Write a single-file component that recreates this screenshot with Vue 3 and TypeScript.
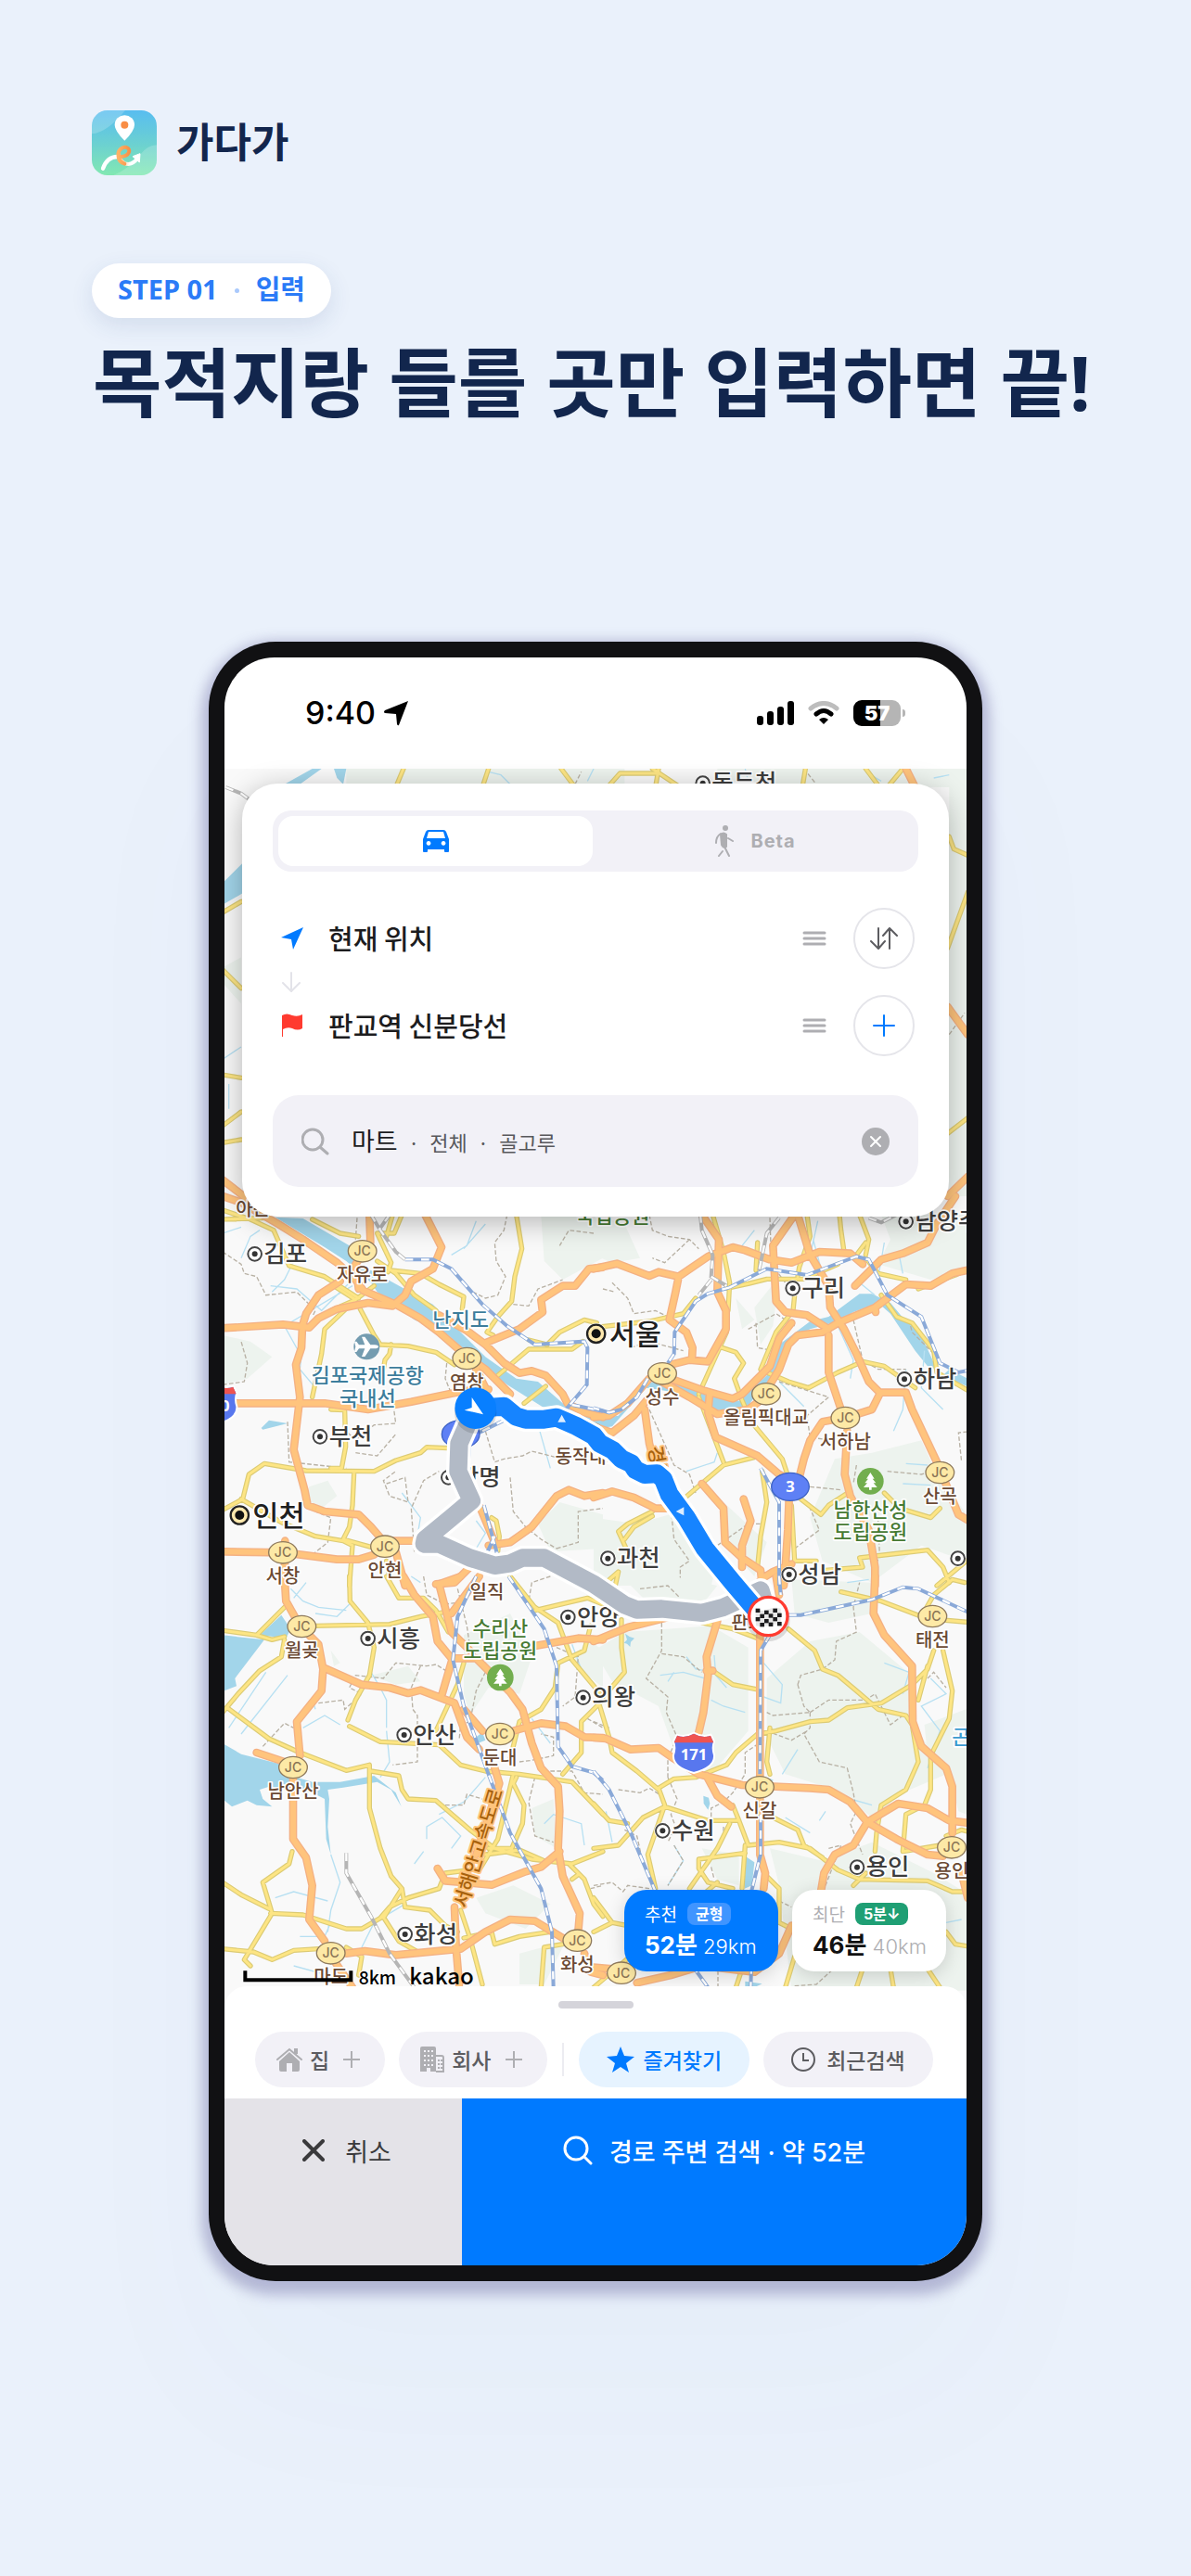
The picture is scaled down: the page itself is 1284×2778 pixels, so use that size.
<script setup lang="ts">
interface Tile {
  x: number
  y: number
  green: string
  water: string
  stream: string
  border: string
  yellow: string
  orange: string
  rail: string
  oldRail: string
}
interface Place {
  name: string
  x: number
  y: number
}

const tiles: Tile[] = [
  {
    x: 0,
    y: 0,
    green:
      'M1030 60 L1230 60 L1230 200 L1100 270 L1040 210Z M0 450 L90 470 L160 520 L80 590 L0 610Z M280 940 L340 920 L370 970 L320 1010 L270 980Z M1020 1060 L1090 990 L1230 1030 L1230 1140 L1060 1150Z',
    water:
      'M170 68 L260 72 L410 160 L430 220 L480 240 L680 350 L760 430 L850 520 L950 590 L1020 600 L1100 670 L1230 720 L1230 765 L1080 710 L920 610 L850 560 L730 450 L620 400 L500 310 L480 280 L400 210 L330 165Z M125 750 L150 725 L210 735 L130 755Z',
    stream:
      'M250 510 L200 420 L420 290 M155 290 L240 300 L320 370 L420 270 M230 210 L200 270 L160 310 M820 80 L790 160 L740 190 M850 90 L780 170 M260 470 L250 560 L300 620 M1020 740 L1060 880 M630 1100 L640 1040 L580 960 M820 1050 L850 1090 L820 1140 M0 120 L60 100 M60 200 L90 130 L120 110',
    border:
      'M0 180 L60 220 L70 250 L110 260 L140 320 L240 310 L300 370 L290 390 M435 70 L430 140 M920 60 L910 110 L880 150 L885 210 L915 260 L890 320 L850 330 L810 310 M940 350 L990 355 L1020 300 L1100 270 M1200 120 L1120 110 L1090 160 M725 540 L720 590 L740 640 M0 610 L70 600 L80 540 L60 470 M210 730 L215 860 L400 880 M390 750 L430 790 L490 740 L560 735 L550 660 M430 830 L500 840 L560 770 M530 930 L590 910 L600 990 L540 970 L520 920 L560 890 M850 760 L880 860 L910 850 L970 840 L1000 825 L1080 845 M930 910 L940 1020 L980 1070 L1030 1110 L1080 1140 M290 1160 L340 1120 L350 1040 L300 1020 M620 1150 L610 1010 L650 920 L700 890 M1080 1140 L1150 1120 L1150 1020 L1230 1010',
    yellow:
      'M0 45 L90 75 L165 110 L215 225 L330 260 L440 330 M290 75 L380 120 L440 130 M0 75 L150 70 M550 60 L530 130 M580 60 L555 120 L500 120 L545 215 L535 245 M500 210 L560 250 L620 320 L690 370 M545 240 L640 250 L700 285 L780 325 L775 365 M950 60 L968 170 L945 260 L935 340 L890 390 L855 440 L875 450 M490 290 L430 335 L350 370 M360 290 L430 335 L330 430 L320 510 L290 650 M445 365 L490 450 L510 480 L600 485 L690 505 L750 545 M545 480 L540 510 L525 530 L520 560 M350 690 L395 692 L398 810 L385 880 L350 880 M0 1015 L65 980 L85 900 L135 865 L270 888 L490 890 L560 855 L640 830 L660 812 L730 815 M425 895 L420 1000 L410 1070 L390 1110 L480 1135 M60 980 L190 1055 L300 1100 L390 1115 L420 1130 L410 1260 M890 580 L990 495 L1130 495 L1165 470 M990 465 L1050 480 L1090 440 L1170 400 L1210 410 M1045 615 L975 670 M870 1040 L885 1050 L895 1100 L890 1150 M530 1180 L540 1230',
    orange:
      'M0 0 L60 20 L180 90 L260 140 L370 215 L430 270 L455 305 L560 350 L640 395 L700 440 L780 510 L850 560 L930 640 M475 60 L478 150 L430 220 L440 300 M655 60 L708 165 L680 235 L610 275 L590 320 L550 355 M0 427 L195 415 L280 425 L310 395 L370 365 L470 345 L550 355 M380 275 L310 320 L270 380 L258 420 L255 490 L237 545 L250 650 L230 820 L265 950 L275 1000 L330 1020 L440 1030 L480 1070 L515 1110 M0 670 L330 670 L470 690 L610 665 L780 630 L860 625 M1230 230 L1185 235 L1140 290 L1100 290 L1030 335 L1035 375 L960 430 L850 475 M700 385 L790 435 L850 480 L910 540 L960 572 L1000 565 L1045 580 L1100 640 L1115 670 L1170 700 L1230 715 M0 1150 L200 1153 L370 1175 L440 1175 L490 1160 L530 1115 L620 1115 M202 1115 L200 1240 M690 1255 L750 1250 L800 1200 M860 1130 L930 1120 L1000 1070 L1080 970 L1120 950 L1170 970 L1230 960 M820 560 L850 620 M560 1150 L590 1260 M830 1000 L880 1120',
    rail:
      'M590 205 L680 205 L740 235 L840 350 L920 420 L1010 480 L1170 470 L1180 490 L1178 610 L1110 690 M1130 675 L1230 695 M910 725 L800 780 L795 850 M845 1000 L890 1165 M880 1100 L850 1165',
    oldRail: 'M480 60 L510 110 L560 180 L590 205 M540 60 L505 110'
  },
  {
    x: 1200,
    y: 0,
    green:
      'M0 60 L100 90 L150 200 L60 215 L0 190Z M520 360 L600 260 L580 420 L540 480Z M930 60 L1230 60 L1230 230 L1090 270 L920 220 L960 140Z M780 850 L900 830 L1060 790 L1110 900 L1230 1060 L1230 1190 L1060 1130 L900 1250 L740 1180 L700 1040Z M0 1040 L140 1060 L280 1020 L400 1180 L380 1260 L0 1260Z M420 990 L560 1120 L520 1230 L440 1140Z M460 330 L520 400 L480 430Z',
    water:
      'M600 480 L700 405 L760 390 L860 316 L900 316 L960 345 L1010 405 L1050 430 L1110 560 L1080 550 L1040 500 L960 380 L920 345 L840 375 L790 405 L700 430 L650 460 L610 540 L570 620 L520 650 L490 692 L400 692 L300 640 L170 620 L60 745 L0 755 L0 720 L80 710 L170 600 L300 612 L470 662 L560 580Z M1150 560 L1230 600 L1230 625 L1130 580Z',
    stream:
      'M725 80 L705 170 L730 220 M520 110 L480 160 M940 150 L930 210 L920 260 M860 280 L910 320 M790 420 L840 530 L830 590 M1010 560 L1000 690 L970 760 M400 830 L390 860 L300 890 M1000 930 L1090 935 M1010 865 L1080 870 M1070 500 L1060 620 L1130 690 M990 200 L1000 250 M710 140 L780 400 M600 600 L680 680',
    border:
      'M180 60 L190 110 L240 130 L310 140 L340 170 M310 140 L230 215 L190 200 M60 280 L110 330 L130 380 L200 370 L240 390 M30 300 L70 310 M120 490 L180 470 L290 500 M570 70 L575 220 L620 280 M525 410 L530 490 L580 500 L600 450 M500 430 L590 380 L650 420 M840 400 L870 530 L920 560 L1010 560 M1020 400 L1030 440 L1110 520 M180 690 L260 870 L310 900 L330 960 M600 600 L760 650 L690 710 L700 780 L770 790 M850 870 L840 930 M950 890 L1060 900 L1120 880 M700 940 L800 950 M1230 760 L1180 765 L1190 860 M250 1010 L260 1110 L310 1180 L280 1200 L280 1260 M400 1130 L500 1060 L540 1060 M650 1140 L730 1080 L700 1010 M920 1050 L925 1160 L900 1230',
    yellow:
      'M385 60 L420 180 L440 280 L435 370 M430 298 L500 283 L560 268 L680 268 L790 220 M0 425 L180 405 L290 380 L330 330 M530 150 L525 240 M690 60 L700 130 L665 230 L660 260 M795 60 L800 110 L810 180 M860 60 L890 140 L880 190 M880 150 L850 190 M650 320 L645 370 L590 440 L540 560 M340 640 L430 440 M415 490 L460 505 L485 540 L455 590 L480 660 L510 730 L610 850 L630 910 M560 570 L630 600 L695 620 L790 570 L870 535 L940 550 L1040 620 M340 650 L420 860 M520 845 L420 870 L290 980 M880 200 L920 250 L1010 270 M930 320 L980 390 L1030 410 L1100 500 L1110 570 L1230 640 M1050 300 L1170 255 L1230 225 M545 890 L560 990 L540 1100 L530 1200 M640 1000 L650 1180 L720 1180 M670 980 L735 1030 L760 1000 L830 955 M940 960 L990 1010 L1090 1040 L1120 1010 M190 1020 L110 1060 L80 1085 L110 1150 M190 1035 L130 1070 L100 1110 M750 1210 L870 1200 L860 1170 L990 1155 L1080 1145 L1130 1200 L1150 1250 M1110 1260 L1230 1160 M70 1260 L80 1215 L40 1250',
    orange:
      'M350 60 L405 140 L400 310 L428 370 L428 430 L370 535 L310 530 L250 545 M275 260 L265 310 L245 400 L300 440 L320 490 L318 530 M0 235 L75 218 L180 258 L210 245 L275 260 L370 195 L450 165 L490 175 L570 205 L640 215 L730 180 L830 185 L870 220 M650 60 L580 160 L590 340 L620 375 L690 385 L760 430 M660 60 L700 190 L760 290 L765 360 L810 430 L850 510 L890 600 L925 635 L1010 635 L1030 690 L1110 860 L1180 1030 L1230 1060 M845 290 L930 205 L1000 185 L1080 150 L1110 90 L1170 0 M1230 235 L1160 250 L1090 290 L1010 285 L910 360 L790 410 L740 440 L660 450 L630 480 L600 560 L540 660 L500 690 L400 705 L310 650 L220 600 M910 360 L912 375 M640 410 L600 460 L570 550 L480 640 L450 655 L360 630 L220 580 L180 590 L110 670 L50 710 L0 715 M375 640 L370 700 L395 780 L530 840 L600 900 L640 920 M180 650 L130 710 L60 765 L0 745 M165 690 L180 800 L190 840 M760 450 L760 570 L800 690 M925 640 L900 690 L820 715 L740 730 L700 790 L680 850 L665 910 M820 760 L812 900 L830 970 L890 1080 L910 1200 L910 1260 M350 930 L420 1010 L425 1120 L480 1170 L540 1210 L545 1260 M485 980 L508 1050 L480 1130 L480 1200 M632 980 L628 1080 L620 1200 L615 1260 M0 975 L60 955 L130 975 L200 1010 L240 1010 M540 1240 L580 1215 L640 1190',
    rail:
      'M440 295 L560 235 L690 255 L850 195 L890 205 L950 320 L1060 390 L1120 540 L1180 570 L1230 560 M440 295 L370 315 L330 340 L262 440 L260 510 L240 540 M175 590 L140 650 L90 690 L50 700 L0 685 M540 880 L600 990 L600 1260',
    oldRail:
      'M345 60 L350 110 L385 190 L380 260 L430 290 M380 270 L340 320 M600 70 L560 120 L535 240 M890 70 L930 85 L980 60'
  },
  {
    x: 0,
    y: 1230,
    green:
      'M780 190 L930 120 L1000 260 L960 380 L860 360 L800 450 L780 380Z M480 320 L600 290 L640 340 L560 350Z M1000 750 L1070 720 L1080 880 L1010 840Z M820 1040 L940 1000 L1060 1060 L980 1140 L850 1090Z M1180 0 L1230 30 L1230 60Z M1180 200 L1230 240 L1230 360 L1130 280Z M350 240 L380 280 L360 290Z M960 1220 L1110 1180 L1040 1320 L960 1320Z',
    water:
      'M0 190 L135 205 L40 330 L45 355 L0 372Z M190 125 L220 170 L205 200 L120 190Z M0 540 L60 575 L180 605 L240 650 L290 665 L380 665 L490 645 L560 700 L578 745 L545 690 L500 665 L390 683 L340 690 L345 720 L340 810 L350 900 L335 850 L330 720 L290 700 L150 680 L120 690 L130 720 L160 745 L110 740 L80 725 L30 745 L0 720Z M820 520 L840 505 L850 530 L825 540Z',
    stream:
      'M220 40 L260 80 L310 100 L400 110 M270 20 L230 70 M300 120 L370 130 L410 90 M480 310 L510 360 L530 400 L530 490 M290 400 L300 430 M260 490 L330 450 L380 480 M20 490 L140 310 M60 510 L210 320 M530 500 L540 600 L510 650 M850 650 L780 730 L700 770 M660 850 L660 810 L710 780 L770 840 L740 880 M650 890 L620 930 M350 900 L380 990 L350 1080 L340 1150 M170 1040 L230 1020 L340 1050 M250 1165 L330 1165 L350 1120 M590 1060 L490 1120 L450 1200 M1040 800 L1070 770 L1160 800 L1170 870 M1060 540 L1000 460 M1130 220 L1160 300 M610 0 L640 20 M230 1260 L340 1290 L340 1320',
    border:
      'M310 410 L390 400 L395 430 L450 380 L410 360 L430 320 L520 330 L560 280 L660 290 L690 285 L730 310 M640 290 L610 360 L615 430 L630 450 L630 600 L550 610 M130 550 L200 475 L230 490 M650 0 L660 60 L720 90 L760 85 M760 40 L790 160 L800 230 L855 300 L820 370 L800 470 L770 480 L765 530 M1060 0 L1000 20 L990 80 M1040 170 L1050 230 M1080 230 L1150 260 L1140 390 L1100 420 M1180 460 L1230 490 M960 600 L1000 595 L1070 580 L1070 520 L1030 510 M720 740 L780 740 L790 705 L840 720 M1010 650 L990 730 L1010 840 L1070 860 M1060 630 L1130 630 L1170 700 L1230 705 M1190 1010 L1230 1000',
    yellow:
      'M0 175 L110 190 L160 205 L200 195 M110 190 L200 100 M300 160 L540 155 L640 130 L720 115 M410 0 L412 80 L470 150 L490 230 L475 320 L430 400 L405 465 M200 205 L190 260 L120 305 L50 380 L0 440 M15 425 L150 525 L250 570 L400 628 L475 610 L475 750 L510 880 L545 970 L580 1010 L590 1070 M580 1010 L520 1105 M410 485 L510 535 L700 545 L770 610 L850 630 L960 640 L1130 665 L1230 770 M480 630 L570 645 L580 690 L600 720 L690 725 L800 820 L880 880 L1000 915 L1130 930 L1230 890 M530 0 L570 70 L650 70 L690 110 L730 180 M780 280 L760 350 L690 500 M930 0 L1010 100 L1085 150 L1130 270 L1230 390 M1010 110 L1180 70 L1230 90 M1190 160 L1170 240 L1085 280 L1075 360 L1030 430 L960 470 L930 590 M1230 400 L1160 470 L1160 570 L1100 640 M940 640 L890 850 L830 950 M800 950 L720 960 L700 1010 L600 1040 L540 1070 L510 1105 M950 650 L940 670 L975 740 L970 800 L935 880 L860 880 M850 900 L960 885 L1040 920 M590 1070 L670 1080 L720 1130 L760 1150 M0 990 L60 1030 L150 1075 M155 1090 L260 1095 L400 1140 L450 1140 L520 1100 M225 890 L215 930 L130 990 L160 1090 L70 1240 L90 1260 M0 1205 L100 1215 L160 1240 L230 1210 L310 1205 M400 1200 L450 1230 L440 1290 M525 1110 L570 1180 L640 1220 M770 1080 L800 1170 L840 1320 M780 1170 L870 1150 L880 1190 L960 1165 L1060 1150 M1030 1330 L1040 1200 L1100 1190 M1120 930 L1170 980 L1200 1060 L1230 1100 M1130 980 L1150 965',
    orange:
      'M200 0 L205 80 L250 160 L310 220 L325 300 L320 370 L240 470 L250 580 M325 295 L450 350 L540 360 L600 378 L640 368 L750 410 L790 520 L830 560 M110 570 L200 600 M228 640 L228 850 L270 910 L290 1000 L280 1110 L330 1180 M585 0 L620 60 L680 130 L695 210 L740 265 L820 265 L930 375 L970 430 L1000 540 L1030 620 L1085 680 L1090 760 L1085 880 L1100 970 L1155 1090 L1150 1150 M700 25 L740 180 L800 240 M770 0 L700 25 M830 0 L740 120 M745 260 L710 380 M780 430 L840 500 M940 500 L1030 475 L1110 485 L1170 520 L1230 522 M880 620 L895 670 L820 900 M695 945 L720 985 L870 998 L980 955 L1030 940 L1090 890 M400 1220 L460 1212 L560 1225 L770 1205 L850 1150 L930 1110 L1010 1115 L1100 1170 L1150 1180 M750 1070 L755 1200 L765 1320 M1010 225 L1150 200 L1230 205 M365 1250 L420 1330 M1170 1220 L1190 1280 L1230 1290',
    rail:
      'M820 0 L760 130 L745 270 L780 420 L860 640 L930 830 L1030 1010 L1065 1150 L1070 1330 M925 0 L1040 170 L1080 290 L1085 550 L1130 615 L1200 635 L1230 660',
    oldRail: 'M400 895 L400 960 L480 1100 L540 1220 L620 1330'
  },
  {
    x: 1200,
    y: 1230,
    green:
      'M0 240 L100 180 L380 160 L500 230 L500 500 L380 640 L260 560 L210 420 L60 340Z M560 330 L700 210 L860 180 L1040 330 L1030 470 L1140 640 L1000 700 L900 780 L780 690 L620 640 L560 520Z M640 10 L900 20 L900 120 L760 150 L650 120Z M120 30 L260 0 L400 30 L360 80 L160 70Z M1070 480 L1230 420 L1230 780 L1180 760 L1150 640 L1080 580Z M570 880 L740 920 L900 860 L1100 960 L1230 1040 L1230 1340 L640 1340 L600 1000Z M350 880 L470 900 L470 1000 L400 980Z',
    water:
      'M490 905 L520 925 L512 1000 L488 1010Z M355 710 L372 716 L376 735 L370 755 L356 735Z M102 185 L116 195 L132 200 L120 212 L118 228 L108 218 L98 215 L108 205Z M490 1310 L545 1318 L520 1330 L490 1330Z',
    stream:
      'M215 320 L290 310 L360 330 M300 260 L330 300 L390 310 M390 255 L395 320 L430 360 M240 340 L260 310 M380 400 L420 420 L490 440 M550 280 L610 350 L605 410 L550 390 M660 560 L610 640 M550 650 L580 660 M940 280 L1020 310 L1000 380 M1090 330 L1140 380 L1060 420 L1120 500 L1080 620 M620 780 L700 830 M830 720 L900 740 M750 760 L730 790 M820 20 L890 10 M240 1000 L290 920 L260 870 M1140 1120 L1190 1110 M60 860 L40 760',
    border:
      'M150 40 L240 30 L280 70 M220 150 L220 240 L170 330 L240 390 L235 440 L270 520 L240 590 L240 650 M220 250 L290 260 L350 310 M660 350 L670 320 L740 300 L780 270 L785 210 L850 180 L840 100 L860 20 M660 350 L680 420 L700 440 L580 450 L560 440 M700 440 L760 400 L880 400 L910 380 L960 480 L1000 450 M700 440 L700 490 L680 510 L730 600 L820 620 L840 700 L850 760 L830 800 L870 900 M560 500 L640 530 L690 500 M550 530 L490 570 L490 640 L450 700 L420 730 L380 750 L380 820 L330 830 M240 650 L270 720 L250 770 L265 810 L240 860 M80 690 L150 700 L180 685 L220 710 M100 820 L140 840 L160 930 M420 810 L420 840 M260 870 L290 920 L240 1000 M380 940 L390 980 M0 1000 L60 990 L95 1020 L110 1000 L180 1010 M1080 330 L1100 310 L1140 360 M760 880 L800 870 L750 1000 M600 1050 L640 1070 M650 1325 L720 1320 L770 1275 M402 1275 L402 1330 M0 470 L50 490',
    yellow:
      'M350 150 L450 170 L530 200 M630 170 L715 240 L740 300 L790 320 L850 370 L920 430 L1010 450 L1030 480 L1050 600 L1010 690 L930 740 L915 830 L910 890 M385 305 L450 350 L525 365 M1100 240 L1080 300 L1030 350 L930 410 L820 425 L760 465 L700 470 L590 500 L530 510 L460 570 L430 610 L330 650 L260 655 L210 685 L230 740 L175 900 L200 1010 M570 490 L560 600 L570 640 M1130 240 L1160 370 L1150 460 L1090 580 L1090 690 L1070 740 L1010 770 L1000 890 M800 50 L930 80 L1060 130 L1100 60 L1160 10 L1200 20 M1060 135 L1230 150 M1080 290 L1050 400 M20 420 L50 520 L60 570 L140 630 L210 690 M0 880 L80 870 L160 780 L230 745 L370 790 L470 790 M500 870 L600 860 L700 880 L790 950 L860 980 L1080 985 L1160 1020 L1230 1020 M0 735 L50 790 L110 800 M440 800 L400 880 L310 1010 M490 870 L480 1010 M490 895 L340 915 L340 945 L370 990 L450 1010 M450 740 L470 790 L500 870 M580 780 L660 820 L680 870 L740 910 M560 970 L600 1010 L600 1120 L640 1140 M0 1040 L60 1120 L0 1150 M60 1120 L110 1130 M90 140 L90 230 L100 310 L40 380 M1140 1150 L1170 1190 L1230 1200 M650 1230 L620 1330 M870 1270 L850 1330 M960 1270 L970 1330 M1080 1270 L1120 1330 M480 1270 L460 1330 M400 990 L0 1330 M1120 870 L1000 890 M840 1000 L880 960 M1140 840 L1190 820 L1230 830',
    orange:
      'M910 0 L905 120 L940 190 L1030 290 L1032 470 L1060 550 L1140 620 L1160 680 L1160 830 M400 145 L365 260 L370 320 L355 440 L340 505 M365 305 L385 305 M0 210 L110 165 L250 130 M0 522 L40 525 L120 560 L210 555 L260 590 L340 640 L480 675 L700 685 L760 690 L830 730 L885 795 L980 850 L1080 900 L1130 905 M365 645 L400 710 L445 745 M885 795 L840 870 L780 900 L745 960 L735 1020 M885 795 L985 735 L1080 750 L1150 790 L1230 800 M538 190 L538 900 L555 960 L550 1010 M1190 960 L1210 1040 M0 1265 L60 1270 M140 1315 L250 1290 L350 1260 L520 1280 L600 1220 L640 1130 M590 0 L600 60',
    rail:
      'M570 190 L540 240 L538 640 M540 770 L540 900 L510 1020 M510 1260 L508 1330 M630 125 L670 125 L900 75 L1000 35 L1050 40 L1230 125 M600 0 L605 60 M0 630 L50 690 L120 830 L200 1020 M320 1260 L370 1330',
    oldRail: ''
  },
  {
    x: 0,
    y: -1383,
    green: 'M400 0 L1300 0 L1300 60 L400 60Z M1600 0 L2410 0 L2410 1383 L2350 1383 L2350 60 L1600 60Z M6 640 L60 610 L60 760 L6 700Z',
    water: 'M200 50 L290 0 L320 0 L250 50Z M360 0 L400 0 L390 50 L370 30Z M0 370 L70 300 L70 400 L0 440Z',
    stream: 'M860 10 L900 20 L930 50 M1180 40 L1200 0 M1690 0 L1700 40 M2080 10 L2130 40 M0 940 L60 900 M20 1020 L20 1100 M2300 30 L2350 20',
    border: 'M1140 50 L1160 10 M1880 0 L1920 50 M2350 860 L2400 790',
    yellow:
      'M585 0 L560 60 M860 0 L840 60 M1095 0 L1140 60 M1245 60 L1285 15 L1410 15 M1390 0 L1480 60 M1410 0 L1400 60 M1885 0 L1875 60 M2080 0 L2125 60 M2200 0 L2150 60 M0 465 L60 430 M0 650 L60 710 M0 990 L60 1000 M0 1155 L60 1110 M0 1210 L60 1200 M2350 220 L2365 260 L2410 280 M2345 580 L2410 400 M2345 1180 L2410 1130',
    orange: 'M2210 0 L2245 70 M0 1330 L90 1400 M2345 770 L2410 860 M2345 1383 L2410 1320',
    rail: '',
    oldRail: 'M10 60 L60 80 L100 110'
  }
]

const cities: Place[] = [
  { name: '동두천', x: 1553, y: -1336 },
  { name: '김포', x: 104, y: 187 },
  { name: '부천', x: 315, y: 778 },
  { name: '광명', x: 730, y: 910 },
  { name: '구리', x: 1844, y: 298 },
  { name: '하남', x: 2205, y: 592 },
  { name: '남양주', x: 2210, y: 82 },
  { name: '과천', x: 1246, y: 1172 },
  { name: '성남', x: 1832, y: 1224 },
  { name: '광주', x: 2378, y: 1172 },
  { name: '시흥', x: 470, y: 1431 },
  { name: '안산', x: 587, y: 1743 },
  { name: '안양', x: 1117, y: 1362 },
  { name: '의왕', x: 1166, y: 1622 },
  { name: '화성', x: 590, y: 2388 },
  { name: '수원', x: 1423, y: 2053 },
  { name: '용인', x: 2052, y: 2171 }
]
const capitals: Place[] = [
  { name: '인천', x: 55, y: 1032 },
  { name: '서울', x: 1208, y: 445 }
]
const junctions: Place[] = [
  { name: '자유로', x: 452, y: 178 },
  { name: '염창', x: 790, y: 525 },
  { name: '동작대교', x: 1186, y: 766 },
  { name: '안현', x: 525, y: 1133 },
  { name: '서창', x: 195, y: 1153 },
  { name: '성수', x: 1422, y: 574 },
  { name: '올림픽대교', x: 1758, y: 640 },
  { name: '서하남', x: 2014, y: 717 },
  { name: '산곡', x: 2320, y: 894 },
  { name: '월곶', x: 256, y: 1392 },
  { name: '둔대', x: 897, y: 1740 },
  { name: '남안산', x: 228, y: 1848 },
  { name: '마도', x: 350, y: 2449 },
  { name: '화성', x: 1147, y: 2408 },
  { name: '태전', x: 2296, y: 1359 },
  { name: '신갈', x: 1737, y: 1912 },
  { name: '용인', x: 2358, y: 2107 },
  { name: '', x: 1290, y: 2513 }
]
const flagCells = Array.from({ length: 24 }, (_, i) => ({ c: i % 6, r: Math.floor(i / 6) })).filter(
  (k) => (k.c + k.r) % 2 === 0
)
const wave = [0, 4, 6, 3, 0, 1]
const grayRoute =
  'M800 720 L765 800 L762 890 L805 985 L740 1040 L655 1110 L652 1125 L700 1125 L800 1170 L880 1195 L930 1188 L970 1170 L1040 1170 L1200 1255 L1300 1322 L1340 1338 L1420 1335 L1550 1348 L1620 1330 L1740 1275 L1765 1359'
const blueRoute =
  'M818 686 L910 680 L950 713 L980 722 L1040 722 L1080 716 L1140 742 L1200 775 L1220 800 L1262 822 L1290 850 L1322 865 L1335 885 L1365 900 L1405 898 L1425 915 L1445 965 L1500 1040 L1560 1140 L1650 1250 L1765 1385'
</script>

<template>
  <main class="page">
    <header class="brand">
      <svg class="logo" viewBox="0 0 210 210" aria-hidden="true">
        <defs>
          <linearGradient id="sky" x1="0" y1="0" x2="0" y2="1">
            <stop offset="0" stop-color="#58bdf0" />
            <stop offset=".5" stop-color="#6bd0d2" />
            <stop offset="1" stop-color="#82e8b2" />
          </linearGradient>
          <linearGradient id="ribbon" x1="0" y1="0" x2="1" y2="0">
            <stop offset="0" stop-color="#ffb366" />
            <stop offset="1" stop-color="#f6924a" />
          </linearGradient>
          <linearGradient id="tail" x1="0" y1="0" x2="1" y2="0">
            <stop offset="0" stop-color="#ffb366" />
            <stop offset=".6" stop-color="#fff" />
          </linearGradient>
          <clipPath id="tile"><rect width="210" height="210" rx="50" /></clipPath>
        </defs>
        <g clip-path="url(#tile)">
          <rect width="210" height="210" fill="url(#sky)" />
          <path d="M0 0 H108 Q50 72 0 76Z" fill="#fff" opacity=".2" />
          <path d="M210 112 Q180 112 155 145 Q120 190 70 210 H210Z" fill="#fff" opacity=".18" />
        </g>
        <path d="M106 98 Q74 66 74 47 A32 31 0 0 1 138 47 Q138 66 106 98Z" fill="#fff" />
        <circle cx="106" cy="47" r="12" fill="#f98d45" />
        <path d="M36 188 Q50 150 82 150" fill="none" stroke="#fff" stroke-width="13" stroke-linecap="round" />
        <path d="M86 138 Q92 174 118 174 Q136 172 148 154" fill="none" stroke="url(#tail)" stroke-width="12" />
        <path d="M132 149 L156 140 L154 168Z" fill="#fff" stroke="#fff" stroke-width="3" stroke-linejoin="round" />
        <path
          d="M94 150 C122 148 128 126 112 120 C98 116 82 130 86 150 C87 162 96 170 106 173"
          fill="none"
          stroke="url(#ribbon)"
          stroke-width="12"
          stroke-linecap="round"
        />
      </svg>
      <span class="brand-name">가다가</span>
    </header>

    <p class="step"><span>STEP 01</span><i></i><span>입력</span></p>
    <h1 class="headline">목적지랑 들를 곳만 입력하면 끝!</h1>

    <section class="phone">
      <div class="screen">
        <div class="status">
          <div class="clock">
            <span>9:40</span>
            <svg width="28" height="28" viewBox="0 0 28 28"><path d="M27 1 L17 27 Q16 28 15 26 L14 15 L2 14 Q0 13 2 11Z" /></svg>
          </div>
          <div class="signals">
            <svg width="40" height="26" viewBox="0 0 40 26">
              <rect x="0" y="16" width="7" height="10" rx="3" />
              <rect x="11" y="11" width="7" height="15" rx="3" />
              <rect x="22" y="6" width="7" height="20" rx="3" />
              <rect x="33" y="0" width="7" height="26" rx="3" />
            </svg>
            <svg width="34" height="26" viewBox="0 0 34 26" fill="none" stroke-width="5" stroke-linecap="round">
              <path d="M3 8 Q17 -3 31 8" stroke="#bdbdbd" />
              <path d="M9 14 Q17 7 25 14" stroke="#000" />
              <path d="M12 20 Q17 16 22 20 L17 25Z" fill="#000" stroke="none" />
            </svg>
            <span class="battery"><b>57</b></span>
          </div>
        </div>

        <div class="map-area">
          <svg class="map" viewBox="6 -1383 2400 4011" role="img" aria-label="지도">
            <rect x="0" y="-1390" width="2420" height="4030" fill="#f9f9f9" />
            <g v-for="(t, i) in tiles" :key="'g' + i" :transform="`translate(${t.x} ${t.y})`">
              <path class="green" :d="t.green" />
              <path class="water" :d="t.water" />
              <path class="stream" :d="t.stream" />
              <path class="border" :d="t.border" />
            </g>
            <g v-for="(t, i) in tiles" :key="'yc' + i" :transform="`translate(${t.x} ${t.y})`">
              <path class="road yellow-edge" :d="t.yellow" />
            </g>
            <g v-for="(t, i) in tiles" :key="'y' + i" :transform="`translate(${t.x} ${t.y})`">
              <path class="road yellow" :d="t.yellow" />
            </g>
            <g v-for="(t, i) in tiles" :key="'oc' + i" :transform="`translate(${t.x} ${t.y})`">
              <path class="road orange-edge" :d="t.orange" />
            </g>
            <g v-for="(t, i) in tiles" :key="'o' + i" :transform="`translate(${t.x} ${t.y})`">
              <path class="road orange" :d="t.orange" />
            </g>
            <g v-for="(t, i) in tiles" :key="'r' + i" :transform="`translate(${t.x} ${t.y})`">
              <path class="rail-edge" :d="t.rail" />
              <path class="rail" :d="t.rail" />
              <path class="rail-edge old" :d="t.oldRail" />
              <path class="rail" :d="t.oldRail" />
            </g>

            <g v-for="(c, i) in cities" :key="'c' + i">
              <circle :cx="c.x" :cy="c.y" r="27" fill="#fff" />
              <circle :cx="c.x" :cy="c.y" r="22" fill="#fff" stroke="#444" stroke-width="6" />
              <circle :cx="c.x" :cy="c.y" r="9" fill="#333" />
              <text class="label city" :x="c.x + 29" :y="c.y + 26">{{ c.name }}</text>
            </g>
            <g v-for="c in capitals" :key="c.name">
              <circle :cx="c.x" :cy="c.y" r="34" fill="#fff" />
              <circle :cx="c.x" :cy="c.y" r="29" fill="#ffe9ae" stroke="#222" stroke-width="7" />
              <circle :cx="c.x" :cy="c.y" r="15" fill="#111" />
              <text class="label capital" :x="c.x + 42" :y="c.y + 35">{{ c.name }}</text>
            </g>
            <g v-for="(j, i) in junctions" :key="'j' + i">
              <ellipse :cx="j.x" :cy="j.y" rx="46" ry="35" fill="#fde9a6" stroke="#8f7a5c" stroke-width="4" />
              <text class="jc" :x="j.x" :y="j.y + 15">JC</text>
              <text class="label junction" :x="j.x" :y="j.y + 99">{{ j.name }}</text>
            </g>
            <text class="label junction" x="98" y="62">아는</text>
            <text class="label junction" x="855" y="1303">일직</text>
            <text class="label junction" x="1700" y="1402">판교</text>
            <text class="label lake" x="770" y="422">난지도</text>
            <text class="label lake" x="469" y="602">김포국제공항</text>
            <text class="label lake" x="469" y="677">국내선</text>
            <text class="label lake river" x="2450" y="1774">곤지암</text>
            <text class="label park" x="1262" y="88">국립공원</text>
            <text class="label park" x="2095" y="1037">남한산성</text>
            <text class="label park" x="2095" y="1110">도립공원</text>
            <text class="label park" x="898" y="1422">수리산</text>
            <text class="label park" x="898" y="1495">도립공원</text>
            <text class="highway" transform="translate(790 2306) rotate(-73)">서해안고속도로</text>
            <text class="highway" transform="translate(1376 812) rotate(80)">경부</text>

            <circle cx="466" cy="487" r="42" fill="#749cb0" />
            <path
              d="M504 487 Q503 493 492 493 H478 L460 519 H450 L460 493 H441 L433 504 H426 L430 487 L426 470 H433 L441 481 H460 L450 455 H460 L478 481 H492 Q503 481 504 487Z"
              fill="#fff"
            />
            <g v-for="p in [{ x: 2095, y: 922 }, { x: 898, y: 1557 }]" :key="p.x" :transform="`translate(${p.x} ${p.y})`">
              <circle r="43" fill="#72ae4e" />
              <path d="M0 -28 L13 -8 H7 L18 6 H10 L22 20 H4 V28 H-4 V20 H-22 L-10 6 H-18 L-7 -8 H-13Z" fill="#fff" />
            </g>
            <ellipse cx="1836" cy="940" rx="61" ry="45" fill="#5e80f5" stroke="#3d62c4" stroke-width="4" />
            <text class="shield-text" x="1836" y="957">3</text>
            <ellipse cx="770" cy="770" rx="61" ry="45" fill="#5e80f5" stroke="#3d62c4" stroke-width="4" />
            <g v-for="s in [{ n: '171', x: 1524, y: 1800 }, { n: '110', x: -20, y: 672 }]" :key="s.n" :transform="`translate(${s.x} ${s.y})`">
              <path
                d="M-55 -58 Q-28 -48 0 -64 Q28 -48 55 -58 L66 -36 Q58 -16 66 8 Q70 48 0 66 Q-70 48 -66 8 Q-58 -16 -66 -36Z"
                fill="#5877ee"
                stroke="#fff"
                stroke-width="6"
              />
              <path d="M-54 -55 Q-28 -45 0 -61 Q28 -45 54 -55 L64 -32 H-64Z" fill="#ef5350" />
              <text class="shield-text" x="0" y="24">{{ s.n }}</text>
            </g>

            <g fill="none" stroke-linecap="round" stroke-linejoin="round">
              <path :d="grayRoute" stroke="#fff" stroke-width="78" />
              <path :d="grayRoute" stroke="#b2bac6" stroke-width="58" />
              <path :d="blueRoute" stroke="#fff" stroke-width="80" />
              <path :d="blueRoute" stroke="#1684ff" stroke-width="60" />
            </g>
            <path d="M1097 707 L1110 731 H1084Z M1466 1020 L1492 1006 V1033Z" fill="#fff" opacity=".85" />
            <circle cx="818" cy="700" r="68" fill="#000" opacity=".12" />
            <circle cx="818" cy="686" r="67" fill="#087fff" />
            <path d="M806 651 L843 706 L782 692 L806 684Z" fill="#fff" />
            <circle cx="1765" cy="1371" r="70" fill="#000" opacity=".12" />
            <circle cx="1765" cy="1359" r="62" fill="#fff" stroke="#ff3b30" stroke-width="10" />
            <path d="M1723 1336 Q1745 1345 1762 1337 Q1785 1328 1805 1334 V1386 Q1785 1382 1765 1389 Q1745 1394 1725 1390Z" fill="#e8e8e8" />
            <rect
              v-for="(k, i) in flagCells"
              :key="'f' + i"
              :x="1724 + k.c * 14"
              :y="1334 + k.r * 14 + (wave[k.c] ?? 0)"
              width="14"
              height="13"
              fill="#1d1d1f"
            />
            <path d="M73 2506 V2536 H415 V2506" fill="none" stroke="#000" stroke-width="12" />
            <text class="scale-text" x="440" y="2551">8km</text>
            <text class="kakao" x="604" y="2551">kakao</text>
          </svg>

          <div class="card">
            <div class="segments">
              <button class="segment on" aria-label="자동차">
                <svg width="28" height="24" viewBox="0 0 28 24" fill="#007aff">
                  <path
                    fill-rule="evenodd"
                    d="M6 0 H22 Q24 0 25 2 L28 10 V23 Q28 24 27 24 H24 Q23 24 23 23 V21 H5 V23 Q5 24 4 24 H1 Q0 24 0 23 V10 L3 2 Q4 0 6 0Z M6 2 L4 9 H24 L22 2Z M6 12 a2.4 2.4 0 1 0 .1 0Z M22 12 a2.4 2.4 0 1 0 .1 0Z"
                  />
                </svg>
              </button>
              <button class="segment walk">
                <svg width="20" height="34" viewBox="0 0 20 34" fill="none" stroke="#aeaeb2" stroke-width="2" stroke-linecap="round">
                  <circle cx="11" cy="3" r="3" fill="#aeaeb2" stroke="none" />
                  <path d="M6 10 Q9 7 12 10 V23 Q9 25 7 21Z" fill="#aeaeb2" />
                  <path d="M6 9 Q1 12 1 19 M14 14 L19 17 M10 23 L15 33 M8 28 L4 33" />
                </svg>
                <span>Beta</span>
              </button>
            </div>
            <div class="stop">
              <svg class="stop-icon" width="24" height="24" viewBox="0 0 24 24"><path d="M24 0 L13 24 L11 13 L0 11Z" fill="#007aff" /></svg>
              <span class="stop-name">현재 위치</span>
              <svg width="26" height="18" viewBox="0 0 26 18"><path d="M2 3 H24 M2 9 H24 M2 15 H24" stroke="#aeaeb2" stroke-width="3" stroke-linecap="round" /></svg>
              <button class="round" aria-label="순서 바꾸기">
                <svg width="30" height="24" viewBox="0 0 30 24" fill="none" stroke="#5c5c60" stroke-width="2" stroke-linecap="round" stroke-linejoin="round">
                  <path d="M9 1 V23 L1 15 M9 23 L16 15 M21 23 V1 L14 9 M21 1 L29 9" />
                </svg>
              </button>
            </div>
            <div class="between">
              <svg width="22" height="22" viewBox="0 0 22 22" fill="none" stroke="#e3e3e9" stroke-width="2" stroke-linecap="round"><path d="M11 1 V21 L2 12 M11 21 L20 12" /></svg>
            </div>
            <div class="stop">
              <svg class="stop-icon" width="24" height="26" viewBox="0 0 24 26">
                <path d="M1 2 Q6 -1 12 2 Q18 4 23 1 V16 Q18 19 12 16 Q7 14 2 17 V25 H1Z" fill="#ff3b30" />
              </svg>
              <span class="stop-name">판교역 신분당선</span>
              <svg width="26" height="18" viewBox="0 0 26 18"><path d="M2 3 H24 M2 9 H24 M2 15 H24" stroke="#aeaeb2" stroke-width="3" stroke-linecap="round" /></svg>
              <button class="round" aria-label="경유지 추가">
                <svg width="24" height="24" viewBox="0 0 24 24"><path d="M12 1 V23 M1 12 H23" stroke="#007aff" stroke-width="2" stroke-linecap="round" /></svg>
              </button>
            </div>
            <label class="search">
              <svg width="30" height="30" viewBox="0 0 30 30" fill="none" stroke="#aeaeb2" stroke-width="3" stroke-linecap="round">
                <circle cx="12" cy="13" r="11" />
                <path d="M20 21 L28 28" />
              </svg>
              <input type="text" value="마트" aria-label="검색어" />
              <span class="filters">·<em>전체</em>·<em>골고루</em></span>
              <button class="clear" aria-label="지우기">
                <svg width="30" height="30" viewBox="0 0 30 30">
                  <circle cx="15" cy="15" r="15" fill="#aeaeb2" />
                  <path d="M10 10 L20 20 M20 10 L10 20" stroke="#fff" stroke-width="2" stroke-linecap="round" />
                </svg>
              </button>
            </label>
          </div>

          <div class="routes">
            <button class="route picked">
              <span class="route-top">추천<b class="tag">균형</b></span>
              <span class="route-main"><strong>52분</strong> 29km</span>
            </button>
            <button class="route">
              <span class="route-top">최단<b class="tag">5분↓</b></span>
              <span class="route-main"><strong>46분</strong> 40km</span>
            </button>
          </div>
        </div>

        <div class="sheet">
          <i class="grip"></i>
          <div class="chips">
            <button class="chip">
              <svg width="28" height="28" viewBox="0 0 28 28" fill="#aeaeb2">
                <path d="M14 6 L25 16 V25 Q25 27 23 27 H17 V18 H11 V27 H5 Q3 27 3 25 V16Z" />
                <path d="M1 14 L14 3 L27 14 M21 3 V8" fill="none" stroke="#aeaeb2" stroke-width="2" stroke-linecap="round" />
                <rect x="19" y="2" width="4" height="6" />
              </svg>
              집
              <svg class="plus" width="18" height="18" viewBox="0 0 18 18"><path d="M9 0 V18 M0 9 H18" stroke="#aeaeb2" stroke-width="2" /></svg>
            </button>
            <button class="chip">
              <svg width="26" height="28" viewBox="0 0 26 28">
                <path d="M2 0 H15 Q17 0 17 2 V27 H11 V23 H7 V27 H0 V2 Q0 0 2 0Z" fill="#aeaeb2" />
                <path d="M17 10 H23 Q25 10 25 12 V27 H17" fill="none" stroke="#aeaeb2" stroke-width="2" />
                <path d="M4 5 H14 M4 10 H14 M4 15 H14 M4 20 H14" stroke="#f2f1f7" stroke-width="2" stroke-dasharray="2 2" />
                <path d="M19 15 H24 M19 19 H24 M19 23 H24" stroke="#aeaeb2" stroke-width="2" stroke-dasharray="2 1" />
              </svg>
              회사
              <svg class="plus" width="18" height="18" viewBox="0 0 18 18"><path d="M9 0 V18 M0 9 H18" stroke="#aeaeb2" stroke-width="2" /></svg>
            </button>
            <i class="rule"></i>
            <button class="chip star">
              <svg width="30" height="28" viewBox="0 0 30 28"><path d="M15 0 L19 10 L30 11 L21 18 L24 28 L15 22 L6 28 L9 18 L0 11 L11 10Z" fill="#007aff" /></svg>
              즐겨찾기
            </button>
            <button class="chip recent">
              <svg width="26" height="26" viewBox="0 0 26 26" fill="none" stroke="#5c5c60" stroke-width="2"><circle cx="13" cy="13" r="12" /><path d="M13 6 V14 H19" /></svg>
              최근검색
            </button>
          </div>
        </div>
        <div class="actions">
          <button class="cancel">
            <svg width="24" height="24" viewBox="0 0 24 24"><path d="M2 2 L22 22 M22 2 L2 22" stroke="#3a3a3c" stroke-width="4" stroke-linecap="round" /></svg>
            취소
          </button>
          <button class="go">
            <svg width="32" height="32" viewBox="0 0 32 32" fill="none" stroke="#fff" stroke-width="3" stroke-linecap="round">
              <circle cx="14" cy="14" r="12" />
              <path d="M23 23 L30 30" />
            </svg>
            경로 주변 검색 · 약 52분
          </button>
        </div>
      </div>
    </section>
  </main>
</template>

<style>
html,
body {
  background: #eaf1fb;
}
</style>

<style scoped>
.page {
  box-sizing: border-box;
  min-height: 100vh;
  padding: 119px 99px 200px;
  background: #eaf1fb;
  color: #12264d;
  font-family: 'Noto Sans CJK KR', 'Noto Sans', sans-serif;
}
button {
  margin: 0;
  padding: 0;
  border: 0;
  background: none;
  font: inherit;
  color: inherit;
  cursor: pointer;
}
svg {
  display: block;
  flex: none;
}
.brand {
  display: flex;
  align-items: center;
  gap: 21px;
  height: 70px;
}
.logo {
  width: 70px;
  height: 70px;
}
.brand-name {
  font-size: 44px;
  font-weight: 700;
  line-height: 64px;
  padding-bottom: 6px;
}
.step {
  box-sizing: border-box;
  display: flex;
  align-items: center;
  width: fit-content;
  height: 59px;
  margin: 95px 0 0;
  padding: 0 28px 4px;
  gap: 18px;
  border-radius: 30px;
  background: #fff;
  box-shadow: 0 8px 24px rgba(40, 70, 130, 0.12);
  color: #2b7bf7;
  font-family: 'Noto Sans', 'Noto Sans CJK KR', sans-serif;
  font-size: 29px;
  line-height: 40px;
  font-weight: 700;
}
.step i {
  width: 5px;
  height: 5px;
  margin-top: 4px;
  border-radius: 50%;
  background: #a9c9fc;
}
.headline {
  margin: 9px 0 0;
  padding-left: 1px;
  font-family: 'Noto Sans', 'Noto Sans CJK KR', sans-serif;
  font-size: 81px;
  line-height: 120px;
  font-weight: 700;
  white-space: nowrap;
}
.phone {
  box-sizing: border-box;
  max-width: 834px;
  margin: 220px auto 0;
  padding: 17px;
  border-radius: 72px;
  background: #111113;
  box-shadow: 0 7px 14px 8px rgba(88, 86, 150, 0.36), 0 120px 200px 20px rgba(60, 90, 160, 0.02);
}
.screen {
  overflow: hidden;
  border-radius: 54px;
  background: #fff;
}
.status {
  display: flex;
  align-items: center;
  justify-content: space-between;
  height: 120px;
  padding: 0 71px 0 87px;
  color: #000;
}
.clock {
  display: flex;
  align-items: center;
  gap: 8px;
  font: 500 34px/40px Inter, sans-serif;
}
.signals {
  display: flex;
  align-items: center;
  gap: 15px;
}
.battery {
  position: relative;
  width: 51px;
  height: 28px;
  border-radius: 9px;
  background: linear-gradient(90deg, #000 57%, #b5b5b5 57%);
  color: #fff;
  font: 700 22px/28px Inter, sans-serif;
  text-align: center;
}
.battery::after {
  position: absolute;
  top: 10px;
  right: -5px;
  width: 3px;
  height: 8px;
  border-radius: 0 3px 3px 0;
  background: #b5b5b5;
  content: '';
}
.map-area {
  position: relative;
}
.map {
  width: 100%;
  height: auto;
}
.green {
  fill: #edf3ee;
}
.water {
  fill: #a2d5ea;
}
.stream {
  fill: none;
  stroke: #b7e0f2;
  stroke-width: 4;
}
.border {
  fill: none;
  stroke: #b8b1a4;
  stroke-width: 4;
  stroke-dasharray: 14 7;
}
.road {
  fill: none;
  stroke-linecap: round;
  stroke-linejoin: round;
}
.yellow-edge {
  stroke: #dccb74;
  stroke-width: 16;
}
.yellow {
  stroke: #fde584;
  stroke-width: 9;
}
.orange-edge {
  stroke: #f4b183;
  stroke-width: 26;
}
.orange {
  stroke: #ffc47d;
  stroke-width: 18;
}
.rail-edge {
  fill: none;
  stroke: #8aa9d8;
  stroke-width: 12;
}
.rail-edge.old {
  stroke: #b5b5b5;
}
.rail {
  fill: none;
  stroke: #fff;
  stroke-width: 7;
  stroke-dasharray: 26 26;
}
.label {
  stroke: #fff;
  stroke-width: 10px;
  stroke-linejoin: round;
  paint-order: stroke;
  font-weight: 500;
}
.city {
  fill: #3d3d3d;
  font-size: 76px;
}
.capital {
  fill: #1f1f1f;
  font-size: 92px;
}
.junction {
  fill: #6b4a34;
  font-size: 60px;
  text-anchor: middle;
}
.lake {
  fill: #3d7d9c;
  font-size: 66px;
  text-anchor: middle;
}
.lake.river {
  fill: #3a9bd0;
}
.park {
  fill: #467a33;
  font-size: 65px;
  text-anchor: middle;
}
.jc {
  fill: #8a7455;
  font: 500 42px Inter, sans-serif;
  text-anchor: middle;
}
.highway {
  fill: #a8620d;
  stroke: #ffc47d;
  stroke-width: 12px;
  stroke-linejoin: round;
  paint-order: stroke;
  font-size: 62px;
  font-weight: 500;
}
.shield-text {
  fill: #fff;
  font: 700 50px 'Noto Sans', sans-serif;
  text-anchor: middle;
}
.scale-text {
  font-size: 58px;
  font-weight: 500;
  stroke: #fff;
  stroke-width: 6px;
  paint-order: stroke;
}
.kakao {
  font-size: 72px;
  font-weight: 500;
}
.card {
  position: absolute;
  top: 16px;
  left: 19px;
  right: 19px;
  box-sizing: border-box;
  padding: 29px 33px 32px;
  border-radius: 38px;
  background: #fff;
  box-shadow: 0 6px 30px rgba(0, 0, 0, 0.28);
}
.segments {
  display: flex;
  padding: 6px;
  border-radius: 20px;
  background: #f2f1f7;
}
.segment {
  display: flex;
  flex: 1;
  align-items: center;
  justify-content: center;
  gap: 18px;
  height: 54px;
  border-radius: 16px;
  color: #aeaeb2;
  font: 700 20px/24px Inter, sans-serif;
}
.segment.walk {
  padding-left: 6px;
}
.segment span {
  letter-spacing: 1px;
}
.segment.on {
  background: #fff;
}
.stop {
  display: flex;
  align-items: center;
  height: 66px;
  padding: 0 4px 0 9px;
}
.segments + .stop {
  margin-top: 39px;
}
.stop-icon {
  margin-right: 27px;
}
.stop-name {
  flex: 1;
  padding-bottom: 3px;
  color: #1c1c1e;
  font-size: 29px;
  font-weight: 500;
}
.round {
  display: flex;
  align-items: center;
  justify-content: center;
  box-sizing: border-box;
  width: 66px;
  height: 66px;
  margin-left: 29px;
  border: 2px solid #e5e5ea;
  border-radius: 50%;
}
.between {
  display: flex;
  align-items: center;
  height: 28px;
  padding-left: 9px;
}
.search {
  display: flex;
  align-items: center;
  height: 99px;
  margin-top: 42px;
  padding: 0 31px;
  border-radius: 28px;
  background: #f2f1f7;
}
.search input {
  width: 54px;
  margin: 0 0 0 24px;
  padding: 0 0 2px;
  border: 0;
  outline: 0;
  background: none;
  color: #1c1c1e;
  font: inherit;
  font-size: 27px;
}
.filters {
  display: flex;
  gap: 11px;
  flex: 1;
  margin-left: 7px;
  color: #58585c;
  font-size: 22px;
}
.filters em {
  font-style: normal;
}
.routes {
  position: absolute;
  right: 22px;
  bottom: 40px;
  display: flex;
  gap: 15px;
}
.route {
  box-sizing: border-box;
  width: 166px;
  height: 88px;
  padding: 8px 22px;
  border-radius: 24px;
  background: #fff;
  box-shadow: 0 4px 20px rgba(0, 0, 0, 0.16);
  color: #aeaeb2;
  text-align: left;
}
.route.picked {
  background: #007aff;
  color: #fff;
}
.route-top {
  display: flex;
  align-items: center;
  gap: 11px;
  height: 32px;
  font-size: 19px;
}
.tag {
  padding: 0 9px;
  border-radius: 8px;
  background: #1f9f74;
  color: #fff;
  font: 700 16px/24px Inter, 'Noto Sans CJK KR', sans-serif;
}
.picked .tag {
  background: #4095ff;
}
.route-main {
  display: block;
  font: 300 22px/36px Inter, 'Noto Sans CJK KR', sans-serif;
  white-space: nowrap;
}
.route-main strong {
  color: #111;
  font-size: 26px;
  font-weight: 700;
}
.picked .route-main strong {
  color: #fff;
}
.sheet {
  position: relative;
  display: flex;
  flex-direction: column;
  align-items: center;
  gap: 25px;
  margin-top: -24px;
  padding: 16px 33px 12px;
  border-radius: 24px 24px 0 0;
  background: #fff;
}
.grip {
  width: 81px;
  height: 8px;
  border-radius: 4px;
  background: #d5d4da;
}
.chips {
  display: flex;
  align-items: center;
  align-self: stretch;
  gap: 15px;
}
.chip {
  display: flex;
  align-items: center;
  justify-content: center;
  gap: 8px;
  height: 60px;
  padding: 0 27px 0 23px;
  border-radius: 30px;
  background: #f2f1f7;
  color: #5c5c60;
  font-size: 23px;
  font-weight: 500;
  white-space: nowrap;
}
.plus {
  margin-left: 7px;
}
.rule {
  width: 2px;
  height: 36px;
  margin: 0 1px;
  background: #ececf1;
}
.chip.star {
  gap: 10px;
  padding: 0 30px;
  background: #e6f3ff;
  color: #007aff;
}
.chip.recent {
  gap: 12px;
  padding: 0 30px;
}
.actions {
  display: flex;
  height: 180px;
}
.actions button {
  display: flex;
  align-items: center;
  justify-content: center;
  box-sizing: border-box;
  padding-bottom: 68px;
}
.actions .cancel {
  flex: 0 0 32%;
  gap: 22px;
  padding-left: 8px;
  background: #e4e3e8;
  color: #3a3a3c;
  font-size: 27px;
}
.actions .go {
  flex: 1;
  gap: 18px;
  background: #007aff;
  color: #fff;
  font-family: Inter, 'Noto Sans CJK KR', sans-serif;
  font-size: 27px;
  font-weight: 500;
}
</style>
